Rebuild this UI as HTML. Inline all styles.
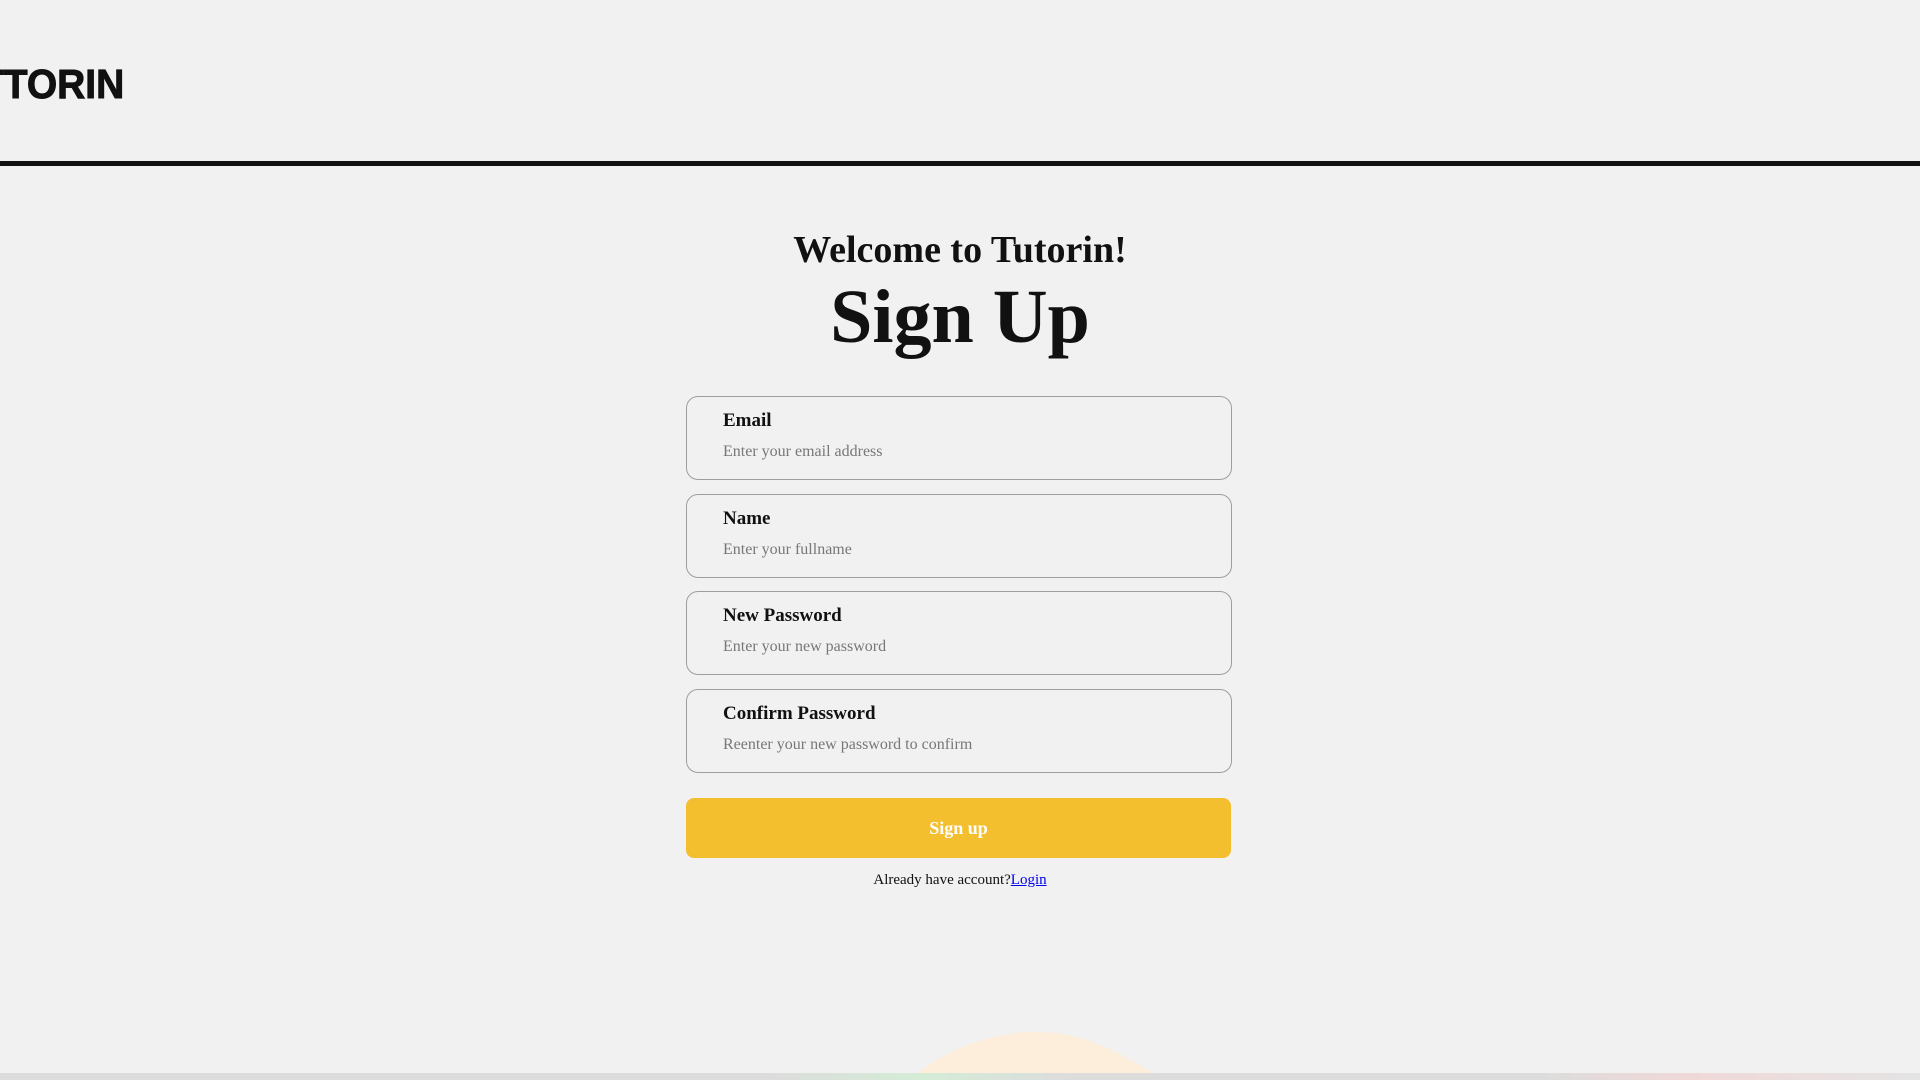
<!DOCTYPE html>
<html><head><meta charset="utf-8"><style>
html,body{margin:0;padding:0;width:1920px;height:1080px;overflow:hidden;background:#f1f1f1;font-family:"Liberation Serif",serif;position:relative}
.logo{position:absolute;left:-20px;top:61px;font-family:"Liberation Sans",sans-serif;font-weight:900;font-size:41px;color:#111;transform:scaleX(0.95);transform-origin:left;-webkit-text-stroke:1px #111}
.hr{position:absolute;left:0;top:161px;width:1920px;height:5px;background:#111}
h1,h2{margin:0;position:absolute;width:1920px;text-align:center;font-weight:bold;color:#111}
h1{top:228px;font-size:38px}
h2{top:274px;font-size:76px}
.box{position:absolute;left:686px;width:546px;height:84px;border:1.5px solid #9e9e9e;border-radius:12px;box-sizing:border-box}
.box b{position:absolute;left:36px;top:13px;font-size:19px;color:#111}
.box span{position:absolute;left:36px;top:46px;font-size:16px;color:#777}
.btn{position:absolute;left:686px;top:798px;width:545px;height:60px;background:#f4bf2f;border-radius:8px;color:#fff;font-weight:bold;font-size:18px;text-align:center;line-height:60px}
.al{position:absolute;top:872px;width:1920px;text-align:center;font-size:15px;color:#111}
.al a{color:#0000ee;text-decoration:underline}
.blob{position:absolute;left:916px;top:1032px;width:240px;height:80px}
.bar{position:absolute;left:0;top:1073px;width:1920px;height:7px;background:linear-gradient(90deg,#dcdcdc 0%,#dcdcdc 40%,#d4ecd6 48%,#dcdcdc 56%,#dcdcdc 80%,#f0d8d8 88%,#e4e4e4 100%)}
</style></head><body>
<div class="logo">TTORIN</div>
<div class="hr"></div>
<h1>Welcome to Tutorin!</h1>
<h2>Sign Up</h2>
<div class="box" style="top:396px"><b>Email</b><span>Enter your email address</span></div>
<div class="box" style="top:494px"><b>Name</b><span>Enter your fullname</span></div>
<div class="box" style="top:591px"><b>New Password</b><span>Enter your new password</span></div>
<div class="box" style="top:689px"><b>Confirm Password</b><span>Reenter your new password to confirm</span></div>
<div class="btn">Sign up</div>
<div class="al">Already have account?<a>Login</a></div>
<svg class="blob" viewBox="0 0 240 80"><path d="M0 42 C30 20 70 0 120 0 C170 0 200 20 240 42 L240 80 L0 80Z" fill="#fdeedb"/></svg>
<div class="bar"></div>
</body></html>
